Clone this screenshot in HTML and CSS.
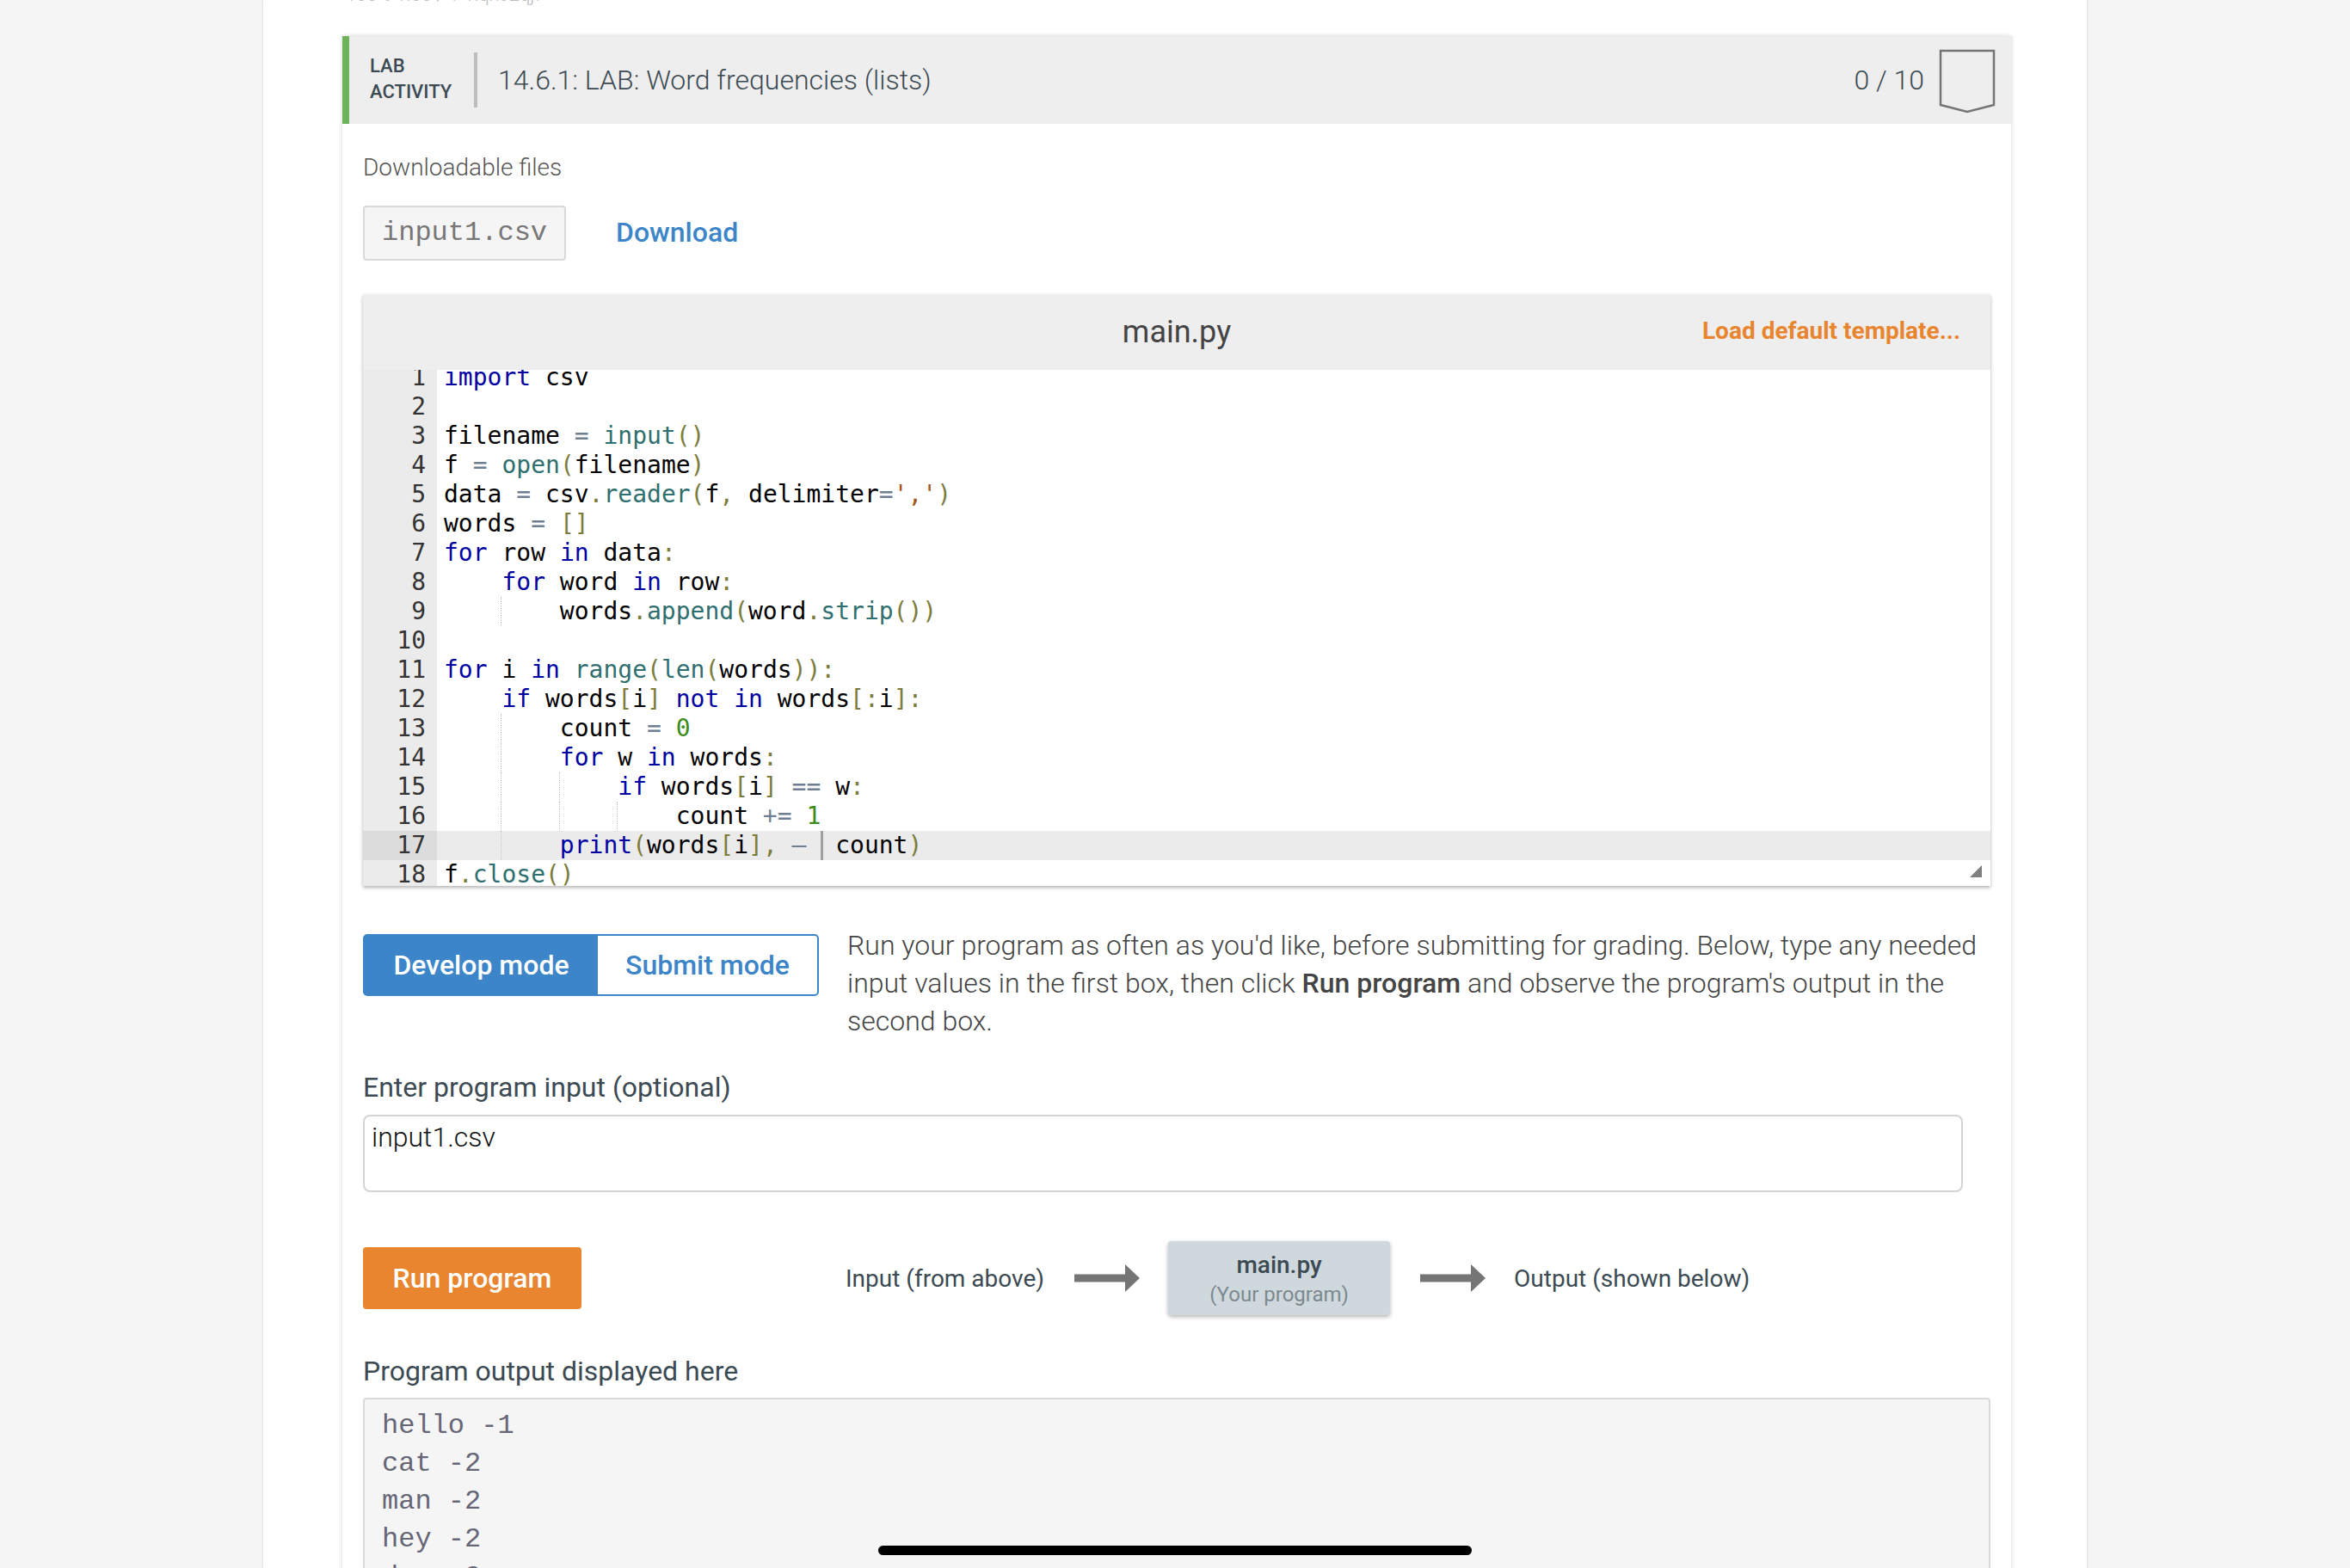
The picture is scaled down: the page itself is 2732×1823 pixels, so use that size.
FILE: index.html
```html
<!DOCTYPE html>
<html lang="en">
<head>
  <meta charset="UTF-8">
  <title>14.6.1: LAB: Word frequencies (lists)</title>
  <link rel="stylesheet" href="styles.css">
</head>
<body>
  <div class="panel">
    <div class="clipped-note">100% 1.00 / 1 1.qxo2qj7</div>

    <div class="lab-card">
      <div class="lab-header">
        <div class="lab-tag">LAB<br>ACTIVITY</div>
        <div class="lab-title">14.6.1: LAB: Word frequencies (lists)</div>
        <div class="lab-score">0 / 10</div>
        <svg class="lab-badge" width="66" height="75" viewBox="0 0 66 75">
          <path d="M2 2H64V65L33 73L2 65Z" fill="none" stroke="#757575" stroke-width="2.5"/>
        </svg>
      </div>

      <div class="lab-body">
        <div class="files-label">Downloadable files</div>
        <div class="files-row">
          <div class="file-name">input1.csv</div>
          <a class="download-link">Download</a>
        </div>

        <div class="editor">
          <div class="editor-head">
            <span class="editor-file">main.py</span>
            <a class="load-template">Load default template...</a>
          </div>
          <div class="editor-view">
            <div class="code">
              <div class="line"><span class="num">1</span><span class="src"><span class="k">import</span> csv</span></div>
              <div class="line"><span class="num">2</span><span class="src"></span></div>
              <div class="line"><span class="num">3</span><span class="src">filename <span class="o">=</span> <span class="f">input</span><span class="p">()</span></span></div>
              <div class="line"><span class="num">4</span><span class="src">f <span class="o">=</span> <span class="f">open</span><span class="p">(</span>filename<span class="p">)</span></span></div>
              <div class="line"><span class="num">5</span><span class="src">data <span class="o">=</span> csv<span class="p">.</span><span class="f">reader</span><span class="p">(</span>f<span class="p">,</span> delimiter<span class="o">=</span><span class="s">','</span><span class="p">)</span></span></div>
              <div class="line"><span class="num">6</span><span class="src">words <span class="o">=</span> <span class="p">[]</span></span></div>
              <div class="line"><span class="num">7</span><span class="src"><span class="k">for</span> row <span class="k">in</span> data<span class="p">:</span></span></div>
              <div class="line"><span class="num">8</span><span class="src">    <span class="k">for</span> word <span class="k">in</span> row<span class="p">:</span></span></div>
              <div class="line"><span class="num">9</span><span class="src"><span class="ig">    </span>    words<span class="p">.</span><span class="f">append</span><span class="p">(</span>word<span class="p">.</span><span class="f">strip</span><span class="p">())</span></span></div>
              <div class="line"><span class="num">10</span><span class="src"></span></div>
              <div class="line"><span class="num">11</span><span class="src"><span class="k">for</span> i <span class="k">in</span> <span class="f">range</span><span class="p">(</span><span class="f">len</span><span class="p">(</span>words<span class="p">)):</span></span></div>
              <div class="line"><span class="num">12</span><span class="src">    <span class="k">if</span> words<span class="p">[</span>i<span class="p">]</span> <span class="k">not</span> <span class="k">in</span> words<span class="p">[:</span>i<span class="p">]:</span></span></div>
              <div class="line"><span class="num">13</span><span class="src"><span class="ig">    </span>    count <span class="o">=</span> <span class="n">0</span></span></div>
              <div class="line"><span class="num">14</span><span class="src"><span class="ig">    </span>    <span class="k">for</span> w <span class="k">in</span> words<span class="p">:</span></span></div>
              <div class="line"><span class="num">15</span><span class="src"><span class="ig">    </span><span class="ig">    </span>    <span class="k">if</span> words<span class="p">[</span>i<span class="p">]</span> <span class="o">==</span> w<span class="p">:</span></span></div>
              <div class="line"><span class="num">16</span><span class="src"><span class="ig">    </span><span class="ig">    </span><span class="ig">    </span>    count <span class="o">+=</span> <span class="n">1</span></span></div>
              <div class="line active"><span class="num">17</span><span class="src"><span class="ig">    </span>    <span class="k">print</span><span class="p">(</span>words<span class="p">[</span>i<span class="p">],</span> <span class="o">–</span> <span class="cursor"></span> count<span class="p">)</span></span></div>
              <div class="line"><span class="num">18</span><span class="src">f<span class="p">.</span><span class="f">close</span><span class="p">()</span></span></div>
            </div>
            <svg class="resize-grip" width="14" height="14" viewBox="0 0 14 14">
              <defs>
                <pattern id="grip-dots" width="2" height="2" patternUnits="userSpaceOnUse">
                  <rect width="2" height="2" fill="#9a9a9a"/>
                  <rect width="1" height="1" fill="#666"/>
                  <rect x="1" y="1" width="1" height="1" fill="#666"/>
                </pattern>
              </defs>
              <path d="M14 0V14H0Z" fill="url(#grip-dots)"/>
            </svg>
          </div>
        </div>

        <div class="mode-row">
          <div class="mode-toggle">
            <div class="mode-btn on">Develop mode</div>
            <div class="mode-btn">Submit mode</div>
          </div>
          <p class="mode-help">Run your program as often as you'd like, before submitting for grading. Below, type any needed input values in the first box, then click <strong>Run program</strong> and observe the program's output in the second box.</p>
        </div>

        <div class="field-label input-label">Enter program input (optional)</div>
        <div class="input-box">input1.csv</div>

        <div class="run-row">
          <div class="run-btn">Run program</div>
          <div class="flow">
            <span class="flow-text">Input (from above)</span>
            <svg class="flow-arrow" width="76" height="32" viewBox="0 0 76 32"><path d="M0 11.5H59V0L76 16L59 32V20.5H0Z" fill="#757575"/></svg>
            <div class="flow-box">
              <div class="flow-box-name">main.py</div>
              <div class="flow-box-sub">(Your program)</div>
            </div>
            <svg class="flow-arrow" width="76" height="32" viewBox="0 0 76 32"><path d="M0 11.5H59V0L76 16L59 32V20.5H0Z" fill="#757575"/></svg>
            <span class="flow-text">Output (shown below)</span>
          </div>
        </div>

        <div class="field-label output-label">Program output displayed here</div>
        <div class="output-box">
          <div>hello -1</div>
          <div>cat -2</div>
          <div>man -2</div>
          <div>hey -2</div>
          <div>dog -2</div>
        </div>
      </div>
    </div>
  </div>

  <div class="home-bar"></div>
</body>
</html>
```

FILE: styles.css
```css
html, body {
  margin: 0;
  padding: 0;
  height: 1823px;
  overflow: hidden;
  background: #f5f5f5;
  font-family: Roboto, sans-serif;
  color: #3c4a53;
}

.panel {
  width: 2120px;
  height: 1823px;
  margin: 0 auto;
  padding: 0 88px 0 92px;
  box-sizing: border-box;
  background: #fff;
  box-shadow: 0 0 3px rgba(0, 0, 0, 0.15);
  overflow: hidden;
}

.clipped-note {
  height: 42px;
  margin-left: 4px;
  font-size: 22px;
  line-height: 24px;
  font-weight: 300;
  color: #bdbdbd;
  margin-top: -18px;
  padding-bottom: 18px;
}

.lab-card {
  background: #fff;
  box-shadow: 0 0 5px rgba(0, 0, 0, 0.18);
}

/* header strip */
.lab-header {
  display: flex;
  align-items: center;
  height: 102px;
  box-sizing: border-box;
  background: #eeeeee;
  border-left: 8px solid #6db35a;
  margin-right: -2px;
  padding-right: 20px;
}

.lab-tag {
  width: 121px;
  margin: -3px 0 0 24px;
  font-size: 22px;
  line-height: 30px;
  font-weight: 500;
}

.lab-title {
  flex: 1;
  height: 64px;
  line-height: 64px;
  border-left: 4px solid #bdbdbd;
  padding-left: 24px;
  font-size: 32px;
  font-weight: 300;
}

.lab-score {
  font-size: 32px;
  font-weight: 300;
  margin-right: 17px;
}

.lab-badge {
  display: block;
  margin-top: 2px;
}

.lab-body {
  padding: 0 24px;
}

.files-label {
  margin-top: 32px;
  font-size: 28px;
  line-height: 38px;
  font-weight: 300;
  color: #555;
}

.files-row {
  display: flex;
  align-items: center;
  margin-top: 25px;
}

.file-name {
  width: 236px;
  height: 64px;
  line-height: 60px;
  box-sizing: border-box;
  padding-left: 20px;
  background: #f5f5f5;
  border: 2px solid #d9d9d9;
  border-radius: 4px;
  font-family: "Liberation Mono", monospace;
  font-size: 32px;
  color: #777;
}

.download-link {
  margin: -2px 0 0 58px;
  font-size: 32px;
  font-weight: 500;
  color: #3c85c8;
}

/* code editor */
.editor {
  margin-top: 39px;
  box-shadow: 0 2px 4px rgba(0, 0, 0, 0.3);
}

.editor-head {
  display: flex;
  align-items: center;
  justify-content: center;
  position: relative;
  height: 88px;
  background: #eeeeee;
}

.editor-file {
  font-size: 36px;
  color: #444;
}

.load-template {
  position: absolute;
  right: 35px;
  top: 24px;
  font-size: 28px;
  line-height: 38px;
  font-weight: 700;
  color: #e8852e;
}

.editor-view {
  position: relative;
  height: 600px;
  overflow: hidden;
  background: #fff;
}

.code {
  margin-top: -8px;
  font-family: "DejaVu Sans Mono", monospace;
  font-size: 28px;
  line-height: 34px;
  color: #000;
}

.line {
  display: flex;
  height: 34px;
}

.num {
  flex: none;
  width: 86px;
  box-sizing: border-box;
  padding-right: 13px;
  text-align: right;
  background: #ebebeb;
  color: #333;
}

.src {
  flex: 1;
  padding-left: 8px;
  white-space: pre;
}

.active .num {
  background: #dcdcdc;
}

.active .src {
  background: #ebebeb;
}

.k { color: #0000a2; }
.f { color: #2f6f6f; }
.p { color: #7c7c3c; }
.o { color: #6f7f93; }
.s { color: #a0561c; }
.n { color: #3c8c1c; }

.ig {
  display: inline-block;
  width: 4ch;
  height: 34px;
  vertical-align: top;
  box-sizing: border-box;
  border-right: 1px dotted #c4c4c4;
}

.cursor {
  display: inline-block;
  width: 0;
  height: 34px;
  vertical-align: top;
  border-left: 3px solid #a0a0a0;
  margin-right: -3px;
}

.resize-grip {
  position: absolute;
  right: 10px;
  bottom: 10px;
}

/* develop / submit */
.mode-row {
  display: flex;
  margin-top: 56px;
  align-items: flex-start;
}

.mode-toggle {
  flex: none;
  display: flex;
  width: 530px;
  height: 72px;
  box-sizing: border-box;
  border: 2px solid #3c85c8;
  border-radius: 5px;
  font-size: 32px;
  font-weight: 500;
  line-height: 68px;
  color: #3c85c8;
}

.mode-btn {
  flex: 1;
  text-align: center;
}

.mode-btn.on {
  flex: none;
  width: 271px;
  background: #3c85c8;
  color: #fff;
}

.mode-help {
  margin: -9px 0 0 33px;
  font-size: 32px;
  line-height: 44px;
  font-weight: 300;
  color: #444;
}

.mode-help strong {
  font-weight: 500;
}

.field-label {
  font-size: 32px;
  line-height: 40px;
}

.input-label {
  margin-top: 35px;
}

.input-box {
  width: 1860px;
  height: 90px;
  margin-top: 12px;
  box-sizing: border-box;
  padding: 3px 8px;
  background: #fff;
  border: 2px solid #d1d5d8;
  border-radius: 8px;
  font-size: 32px;
  line-height: 42px;
  font-weight: 300;
  color: #111;
}

/* run row */
.run-row {
  display: flex;
  align-items: center;
  margin-top: 57px;
  height: 86px;
}

.run-btn {
  width: 254px;
  height: 72px;
  line-height: 72px;
  text-align: center;
  background: #e8852e;
  border-radius: 4px;
  color: #fff;
  font-size: 32px;
  font-weight: 500;
}

.flow {
  display: flex;
  align-items: center;
  margin-left: 307px;
}

.flow-text {
  font-size: 28px;
}

.flow-arrow {
  display: block;
  margin: 0 33px 0 35px;
}

.flow-box {
  width: 258px;
  height: 86px;
  background: #cfd8dc;
  border-radius: 4px;
  box-shadow: 0 2px 5px rgba(0, 0, 0, 0.3);
  text-align: center;
}

.flow-box-name {
  margin-top: 10px;
  font-size: 28px;
  line-height: 36px;
  font-weight: 500;
}

.flow-box-sub {
  font-size: 24px;
  line-height: 32px;
  color: #7d8990;
}

.output-label {
  margin-top: 45px;
}

.output-box {
  margin-top: 11px;
  height: 400px;
  box-sizing: border-box;
  padding: 9px 20px;
  background: #f5f5f5;
  border: 2px solid #d9d9d9;
  border-radius: 4px;
  font-family: "Liberation Mono", monospace;
  font-size: 32px;
  line-height: 44px;
  color: #667;
}

.home-bar {
  position: absolute;
  left: 1021px;
  top: 1797px;
  width: 690px;
  height: 11px;
  border-radius: 6px;
  background: #000;
}
```
